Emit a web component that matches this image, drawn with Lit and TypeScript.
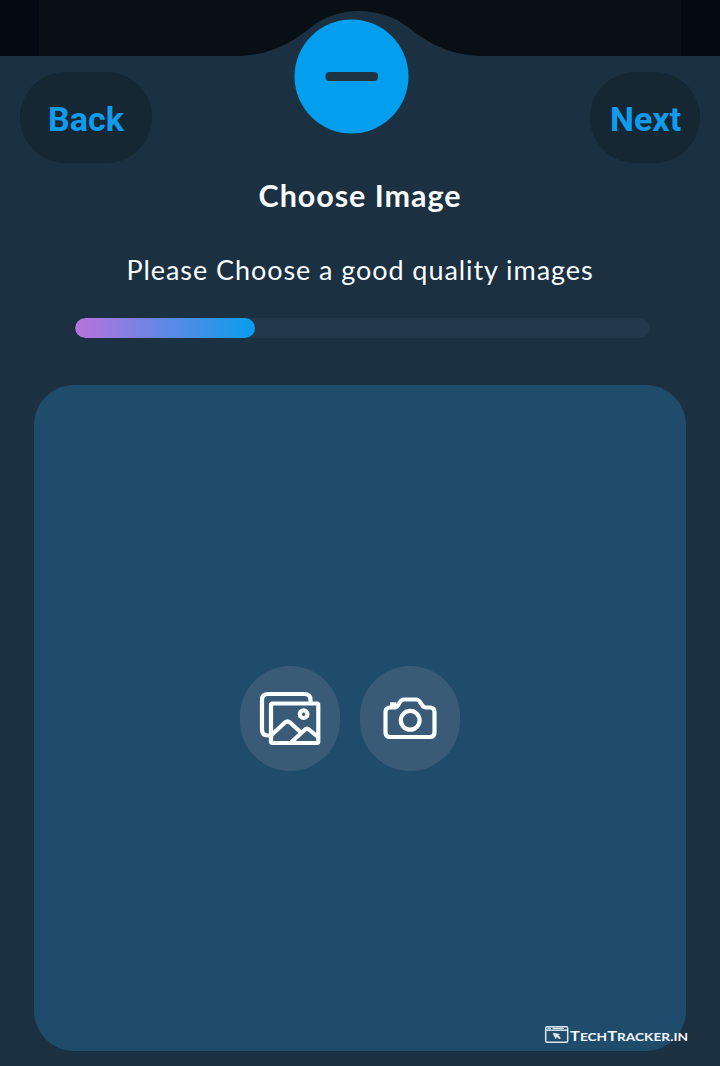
import { LitElement, html, css } from "lit";
import { customElement, property } from "lit/decorators.js";

@customElement("nav-pill")
class NavPill extends LitElement {
  @property() label = "";

  static styles = css`
    :host { display: block; }
    .pill {
      display: block;
      border: 0;
      margin: 0;
      height: 91px;
      padding: 2px 20px 0;
      border-radius: 46px;
      background: #142733;
      color: #119bec;
      font: 700 34px/1 Roboto, sans-serif;
      width: 100%;
      white-space: nowrap;
      text-align: center;
    }
  `;

  render() {
    return html`<button class="pill">${this.label}</button>`;
  }
}

@customElement("step-progress")
class StepProgress extends LitElement {
  @property({ type: Number }) value = 0;

  static styles = css`
    :host { display: block; }
    .track { height: 20px; border-radius: 10px; background: #23384b; overflow: hidden; }
    .fill { height: 100%; border-radius: 10px; background: linear-gradient(90deg, #b972dc, #079eee); }
  `;

  render() {
    return html`<div class="track"><div class="fill" style="width:${this.value}%"></div></div>`;
  }
}

@customElement("app-root")
class AppRoot extends LitElement {
  static styles = css`
    :host { display: block; }
    * { box-sizing: border-box; }
    .screen {
      position: relative;
      width: 720px;
      height: 1066px;
      overflow: hidden;
      background: #1b3040;
      display: flex;
      flex-direction: column;
      font-family: Lato, sans-serif;
      color: #fafdff;
    }
    .header { display: grid; height: 163px; }
    .header > * { grid-area: 1 / 1; }
    .wave { display: block; }
    .bar {
      display: grid;
      grid-template-columns: 132px 1fr 110px;
      padding: 0 20px;
      align-items: end;
    }
    .toggle { display: block; margin: 0 0 29px 142px; }
    .title {
      margin: 12px 0 0;
      height: 40px;
      font-size: 30.5px;
      line-height: 40px;
      font-weight: 700;
      text-align: center;
      letter-spacing: 0.95px;
    }
    .hint {
      margin: 35px 0 0;
      height: 40px;
      font-size: 27px;
      line-height: 40px;
      font-weight: 400;
      text-align: center;
      letter-spacing: 0.93px;
      white-space: nowrap;
    }
    .progress { margin: 28px 70px 0 75px; }
    .picker {
      margin: 47px 34px 0;
      height: 666px;
      border-radius: 40px;
      background: #204c6c;
      display: flex;
      justify-content: center;
      align-items: center;
      gap: 20px;
      padding-right: 20px;
    }
    .source {
      width: 100px;
      height: 105px;
      border: 0;
      padding: 0;
      border-radius: 50px;
      background: #395b77;
    }
    .source svg { display: block; }
    .brand { position: absolute; left: 544px; top: 1024px; }
    .brand-name { font: 700 13px Lato, sans-serif; }
    .brand-small { font-size: 10.8px; }
  `;

  render() {
    return html`
      <main class="screen">
        <header class="header">
          <svg class="wave" width="720" height="163" viewBox="0 0 720 163">
            <path fill="#081016" d="M0 0H720V56H484C446 56 423 39 408 27C393 16 376 11 359 11C342 11 325 16 310 28C295 40 272 56 236 56H0Z" />
            <path fill="#030a12" d="M0 0H39V56H0ZM681 0H720V56H681Z" />
          </svg>
          <div class="bar">
            <nav-pill label="Back"></nav-pill>
            <svg class="toggle" width="115" height="115" viewBox="0 0 115 115">
              <circle cx="57.5" cy="57.5" r="57" fill="#039fee" />
              <rect x="31.5" y="53" width="52.5" height="9" rx="4" fill="#1c3444" />
            </svg>
            <nav-pill label="Next"></nav-pill>
          </div>
        </header>
        <h1 class="title">Choose Image</h1>
        <p class="hint">Please Choose a good quality images</p>
        <step-progress class="progress" .value=${31.3}></step-progress>
        <section class="picker">
          <button class="source" aria-label="Gallery">
            <svg width="100" height="105" viewBox="0 0 100 105" fill="none" stroke="#fbfeff" stroke-width="4.2" stroke-linejoin="round">
              <path d="M31 69.5H28Q22 69.5 22 63.5V34Q22 28 28 28H64.5Q70.5 28 70.5 34V37" />
              <rect x="31" y="37.500" width="47.300" height="39.500" rx="1.500" />
              <circle cx="63.600" cy="48.200" r="3.800" />
              <path d="M31.500 69L45 56.500Q47.500 54.500 50 56.500L61 66.500M50.500 77L64.500 64Q67 61.500 69.500 64L78 71" />
            </svg>
          </button>
          <button class="source" aria-label="Camera">
            <svg width="100" height="105" viewBox="0 0 100 105" fill="none" stroke="#fbfeff" stroke-width="4.200" stroke-linejoin="round">
              <path d="M30 41.500H34Q37 41.500 38.500 38.500L40 36Q41.500 33.500 44 33.500H56Q58.500 33.500 60 36L62 39Q63.500 41.500 66.500 41.500H70Q74.500 41.500 74.500 46V66.500Q74.500 71 70 71H30Q25.500 71 25.500 66.500V46Q25.500 41.500 30 41.500Z" />
              <path stroke="none" fill="#fbfeff" d="M30 36.300H36.500V41H30Z" />
              <circle cx="50.200" cy="54.300" r="9.400" />
            </svg>
          </button>
        </section>
        <svg class="brand" width="150" height="24" viewBox="0 0 150 24">
          <g fill="none" stroke="#dce8f0" stroke-width="1.500">
            <rect x="1.700" y="2.700" width="22" height="15.500" rx="1.500" />
            <path d="M2 6.200H23.500" />
            <path d="M3.500 4.400H7M8.500 4.400H20" stroke-width="1.200" />
          </g>
          <path fill="#dce8f0" d="M8.500 8.800L16 10L14.400 11.500L17 14L15.500 15.200L13 13L11.500 15Z" />
          <text class="brand-name" x="26" y="17" fill="#f1f7fb" textLength="118" lengthAdjust="spacingAndGlyphs">T<tspan class="brand-small">ECH</tspan>T<tspan class="brand-small">RACKER.IN</tspan></text>
        </svg>
      </main>
    `;
  }
}
